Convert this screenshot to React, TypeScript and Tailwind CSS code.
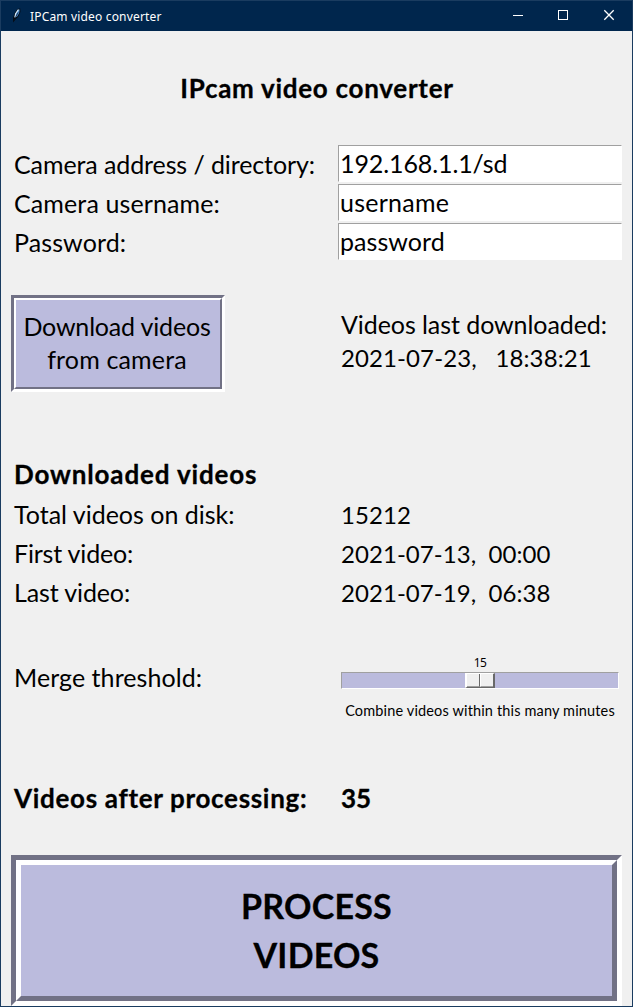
import type { ReactNode } from "react";

function TitleBar() {
  return (
    <header className="flex h-[30px] shrink-0 items-center bg-[#00264d] text-white">
      <svg className="ml-[9px] h-4 w-4" viewBox="0 0 16 16">
        <path d="M3.2 14.4 3.2 9.6 5 4.6 7.6 1 10.2.4 10.4 4 8.2 8.8 5.4 11.6Z" fill="#05080d" />
        <path d="M4.8 10 5.4 5.8 8.2 1.6 9.6 1.4 9.2 5 7.2 8.6Z" fill="#4f8fd0" />
        <path d="M4.8 9.4 5.6 5.6 8.4 1.6" fill="none" stroke="#d9ecfa" strokeWidth="1.1" />
        <path d="M4.4 12.4 6 8.4 8.2 4.4" fill="none" stroke="#0b1a2c" strokeWidth=".7" />
      </svg>
      <span className="ml-1 flex-1 pt-px font-['Noto_Sans',sans-serif] text-[12px] leading-4 tracking-[0.17px]">
        IPCam video converter
      </span>
      <div className="flex">
        <svg className="h-[30px] w-[45px]" viewBox="0 0 45 30" shapeRendering="crispEdges">
          <path d="M17 14.5h10" stroke="#fff" />
        </svg>
        <svg className="h-[30px] w-[45px]" viewBox="0 0 45 30" shapeRendering="crispEdges">
          <rect x="17.5" y="9.5" width="9" height="9" fill="none" stroke="#fff" />
        </svg>
        <svg className="h-[30px] w-[46px]" viewBox="0 0 46 30">
          <path d="m18.3 9.3 9.4 9.4m0-9.4-9.4 9.4" stroke="#fff" strokeWidth="1.3" />
        </svg>
      </div>
    </header>
  );
}

function Field({ label, value, labelClass, valueClass }: { label: string; value: string; labelClass: string; valueClass: string }) {
  return (
    <div className="flex h-[39px]">
      <label className={`w-[324px] leading-[39px] ${labelClass}`}>{label}</label>
      <div
        className={`h-[37px] w-[284px] border border-t-[#a0a0a0] border-r-white border-b-white border-l-[#a0a0a0] bg-white pl-px leading-[35px] ${valueClass}`}
      >
        {value}
      </div>
    </div>
  );
}

function Row({ label, labelClass = "", children }: { label: string; labelClass?: string; children: ReactNode }) {
  return (
    <div className="flex h-[39px]">
      <span className={`w-[327px] leading-[39px] ${labelClass}`}>{label}</span>
      <span className="text-[24px] leading-[40px] tracking-[0.05px] whitespace-pre">{children}</span>
    </div>
  );
}

export default function App() {
  return (
    <div className="flex h-[1007px] w-[633px] flex-col border border-[#1a3c60] bg-[#f0f0f0] font-['Lato',sans-serif] text-[25px] text-black">
      <TitleBar />
      <main className="flex flex-col pl-[13px]">
        <h1 className="h-[114px] pr-[12px] text-center text-[26px] leading-[114px] font-bold tracking-[0.72px] [-webkit-text-stroke:0.3px]">
          IPcam video converter
        </h1>

        <Field label="Camera address / directory:" value="192.168.1.1/sd" labelClass="tracking-[-0.1px]" valueClass="tracking-[-0.1px]" />
        <Field label="Camera username:" value="username" labelClass="tracking-[0.12px]" valueClass="tracking-[0.25px]" />
        <Field label="Password:" value="password" labelClass="tracking-[0.1px]" valueClass="tracking-[0.05px]" />

        <section className="mt-[33px] -ml-[3px] flex h-[97px]">
          <button className="w-[214px] border-[3px] border-t-[#717185] border-r-white border-b-white border-l-[#717185]">
            <span className="flex h-full flex-col items-center justify-center border-2 border-t-white border-r-[#717185] border-b-[#717185] border-l-white bg-[#bbbbdd] pr-[2px] pb-[2px] leading-[33px]">
              <span className="tracking-[-0.18px]">Download videos</span>
              <span className="tracking-[0.15px]">from camera</span>
            </span>
          </button>
          <div className="ml-[116px] flex flex-col justify-center pb-[5px] leading-[33px]">
            <span className="tracking-[-0.07px]">Videos last downloaded:</span>
            <span className="text-[24px] tracking-[0.1px] whitespace-pre">2021-07-23,   18:38:21</span>
          </div>
        </section>

        <h2 className="mt-[62px] h-[41px] text-[26px] leading-[41px] font-bold tracking-[0.85px] [-webkit-text-stroke:0.3px]">
          Downloaded videos
        </h2>
        <Row label="Total videos on disk:">15212</Row>
        <Row label="First video:" labelClass="tracking-[-0.18px]">{"2021-07-13,  00:00"}</Row>
        <Row label="Last video:" labelClass="tracking-[-0.12px]">{"2021-07-19,  06:38"}</Row>

        <section className="mt-[42px] flex h-[66px]">
          <span className="w-[327px] leading-[47px] tracking-[0.06px]">Merge threshold:</span>
          <div className="flex w-[278px] flex-col">
            <span className="h-[18px] shrink-0 text-center font-['Noto_Sans',sans-serif] text-[12px] leading-[17px] tracking-[-0.7px]">
              15
            </span>
            <div className="flex h-[17px] shrink-0 border border-t-[#a0a0a0] border-r-white border-b-white border-l-[#a0a0a0] bg-[#bbbbdd] pl-[123px]">
              <div className="flex h-[15px] w-[30px] border-t border-r-2 border-b border-l-2 border-t-white border-r-[#696969] border-b-[#696969] border-l-white bg-[#f0f0f0]">
                <div className="w-[13px] border-r border-b border-r-[#696969] border-b-[#a0a0a0]" />
                <div className="flex-1 border-b border-l border-b-[#a0a0a0] border-l-white" />
              </div>
            </div>
            <span className="mt-[13px] shrink-0 text-center text-[14.5px] leading-[17px] tracking-[0.15px] whitespace-nowrap">
              Combine videos within this many minutes
            </span>
          </div>
        </section>

        <section className="mt-[58px] flex h-[40px] text-[26px] leading-[40px] font-bold [-webkit-text-stroke:0.3px]">
          <span className="w-[327px] tracking-[0.68px]">Videos after processing:</span>
          <span>35</span>
        </section>

        <button className="mt-[37px] -ml-[3px] h-[151px] w-[611px] border-[5px] border-t-[#717185] border-r-white border-b-white border-l-[#717185]">
          <span className="flex h-full flex-col items-center justify-center border-[5px] border-t-white border-r-[#717185] border-b-[#717185] border-l-white bg-[#bbbbdd] pb-[2px] text-[34px] leading-[49px] font-bold tracking-[0.2px] [-webkit-text-stroke:0.3px]">
            <span>PROCESS</span>
            <span>VIDEOS</span>
          </span>
        </button>
      </main>
    </div>
  );
}
